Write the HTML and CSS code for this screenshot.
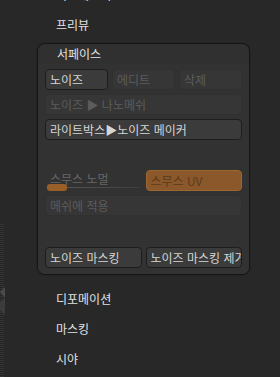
FILE: index.html
```
<!DOCTYPE html>
<html lang="ko">
<head>
    <meta charset="UTF-8">
    <meta name="viewport" content="width=device-width, initial-scale=1.0">
    <title>서페이스</title>
    <link rel="stylesheet" href="styles.css">
</head>
<body>

    <div class="layout">
        <!-- left dock edge -->
        <div class="edge">
            <svg class="edge-arrow" width="6" height="30" viewBox="0 0 6 30">
                <path d="M0 6 L5 1 L5 12 Z" fill="#4a4a4a"/>
                <path d="M0 16 L5 12 L5 29 L0 24 Z" fill="#3c3c3c"/>
            </svg>
        </div>

        <div class="menu">
            <div class="menu-item clipped">지오메트리</div>
            <div class="menu-item">프리뷰</div>

            <!-- Surface panel -->
            <div class="panel">
                <div class="panel-title">서페이스</div>
                <div class="panel-body">
                    <div class="btn-row three">
                        <button class="btn">노이즈</button>
                        <button class="btn off">에디트</button>
                        <button class="btn off">삭제</button>
                    </div>
                    <button class="btn off wide">노이즈 ▶ 나노메쉬</button>
                    <button class="btn wide">라이트박스▶노이즈 메이커</button>

                    <div class="btn-row two spaced">
                        <div class="slider">
                            <span class="slider-label">스무스 노멀</span>
                            <div class="slider-track"><div class="slider-knob"></div></div>
                        </div>
                        <button class="btn orange">스무스 UV</button>
                    </div>
                    <button class="btn off wide">메쉬에 적용</button>

                    <div class="btn-row two bottom">
                        <button class="btn">노이즈 마스킹</button>
                        <button class="btn">노이즈 마스킹 제거</button>
                    </div>
                </div>
            </div>

            <div class="menu-item">디포메이션</div>
            <div class="menu-item">마스킹</div>
            <div class="menu-item">시야</div>
        </div>
    </div>

</body>
</html>
```

FILE: styles.css
```
html, body {
    height: 100%;
}
body {
    margin: 0;
    background-color: #282828;
    font-family: "Noto Sans CJK KR", "Noto Sans", sans-serif;
    overflow: hidden;
}
.layout {
    display: flex;
    height: 100%;
}
.edge {
    position: relative;
    width: 4px;
    flex-shrink: 0;
    margin-top: 224px;
    background-image: repeating-linear-gradient(0deg, #333 0, #333 1px, #262626 1px, #262626 2px);
}
.edge-arrow {
    position: absolute;
    left: 0;
    top: 62px;
}
.menu {
    display: flex;
    flex-direction: column;
    width: 213px;
    margin-left: 33px;
    margin-top: -20px;
}
.menu-item {
    height: 30px;
    line-height: 30px;
    padding-left: 19px;
    font-size: 12px;
    color: #e2e2e2;
}
.panel {
    margin: 3px 0 9px;
    background-color: #303030;
    border: 1px solid #151515;
    border-radius: 8px;
    box-shadow: 0 0 0 1px #242424;
    overflow: hidden;
}
.panel-title {
    height: 20px;
    line-height: 20px;
    padding-left: 19px;
    font-size: 12px;
    color: #e2e2e2;
}
.panel-body {
    display: flex;
    flex-direction: column;
    gap: 4px;
    padding: 5px 7px 6px;
    background-color: #323232;
}
.btn-row {
    display: grid;
    gap: 4px;
}
.btn-row.three {
    grid-template-columns: 1fr 1fr 1fr;
}
.btn-row.two {
    grid-template-columns: 1fr 1fr;
}
.btn-row.spaced {
    margin-top: 26px;
}
.btn-row.bottom {
    margin-top: 27px;
}
.btn {
    height: 21px;
    padding: 0 4px;
    background-color: #3b3b3b;
    border: 1px solid #1d1d1d;
    border-radius: 4px;
    color: #d6d6d6;
    font-family: inherit;
    font-size: 12px;
    text-align: left;
    white-space: nowrap;
    overflow: hidden;
}
.btn.off {
    background-color: #363636;
    border-color: #303030;
    color: #5c5c5c;
}
.btn.wide {
    width: 100%;
}
.btn.orange {
    background-color: #8a582a;
    border-color: #9c6631;
    color: #5c3a1a;
}
.slider {
    position: relative;
    height: 21px;
}
.slider-label {
    display: block;
    padding-left: 5px;
    font-size: 12px;
    line-height: 17px;
    color: #666;
}
.slider-track {
    position: relative;
    margin: 0 2px;
    height: 1px;
    background: linear-gradient(90deg, #5a5a5a, #3e3e3e);
}
.slider-knob {
    position: absolute;
    left: 0;
    top: -3px;
    width: 20px;
    height: 7px;
    border-radius: 3px;
    background-color: #9a5f28;
}
```
